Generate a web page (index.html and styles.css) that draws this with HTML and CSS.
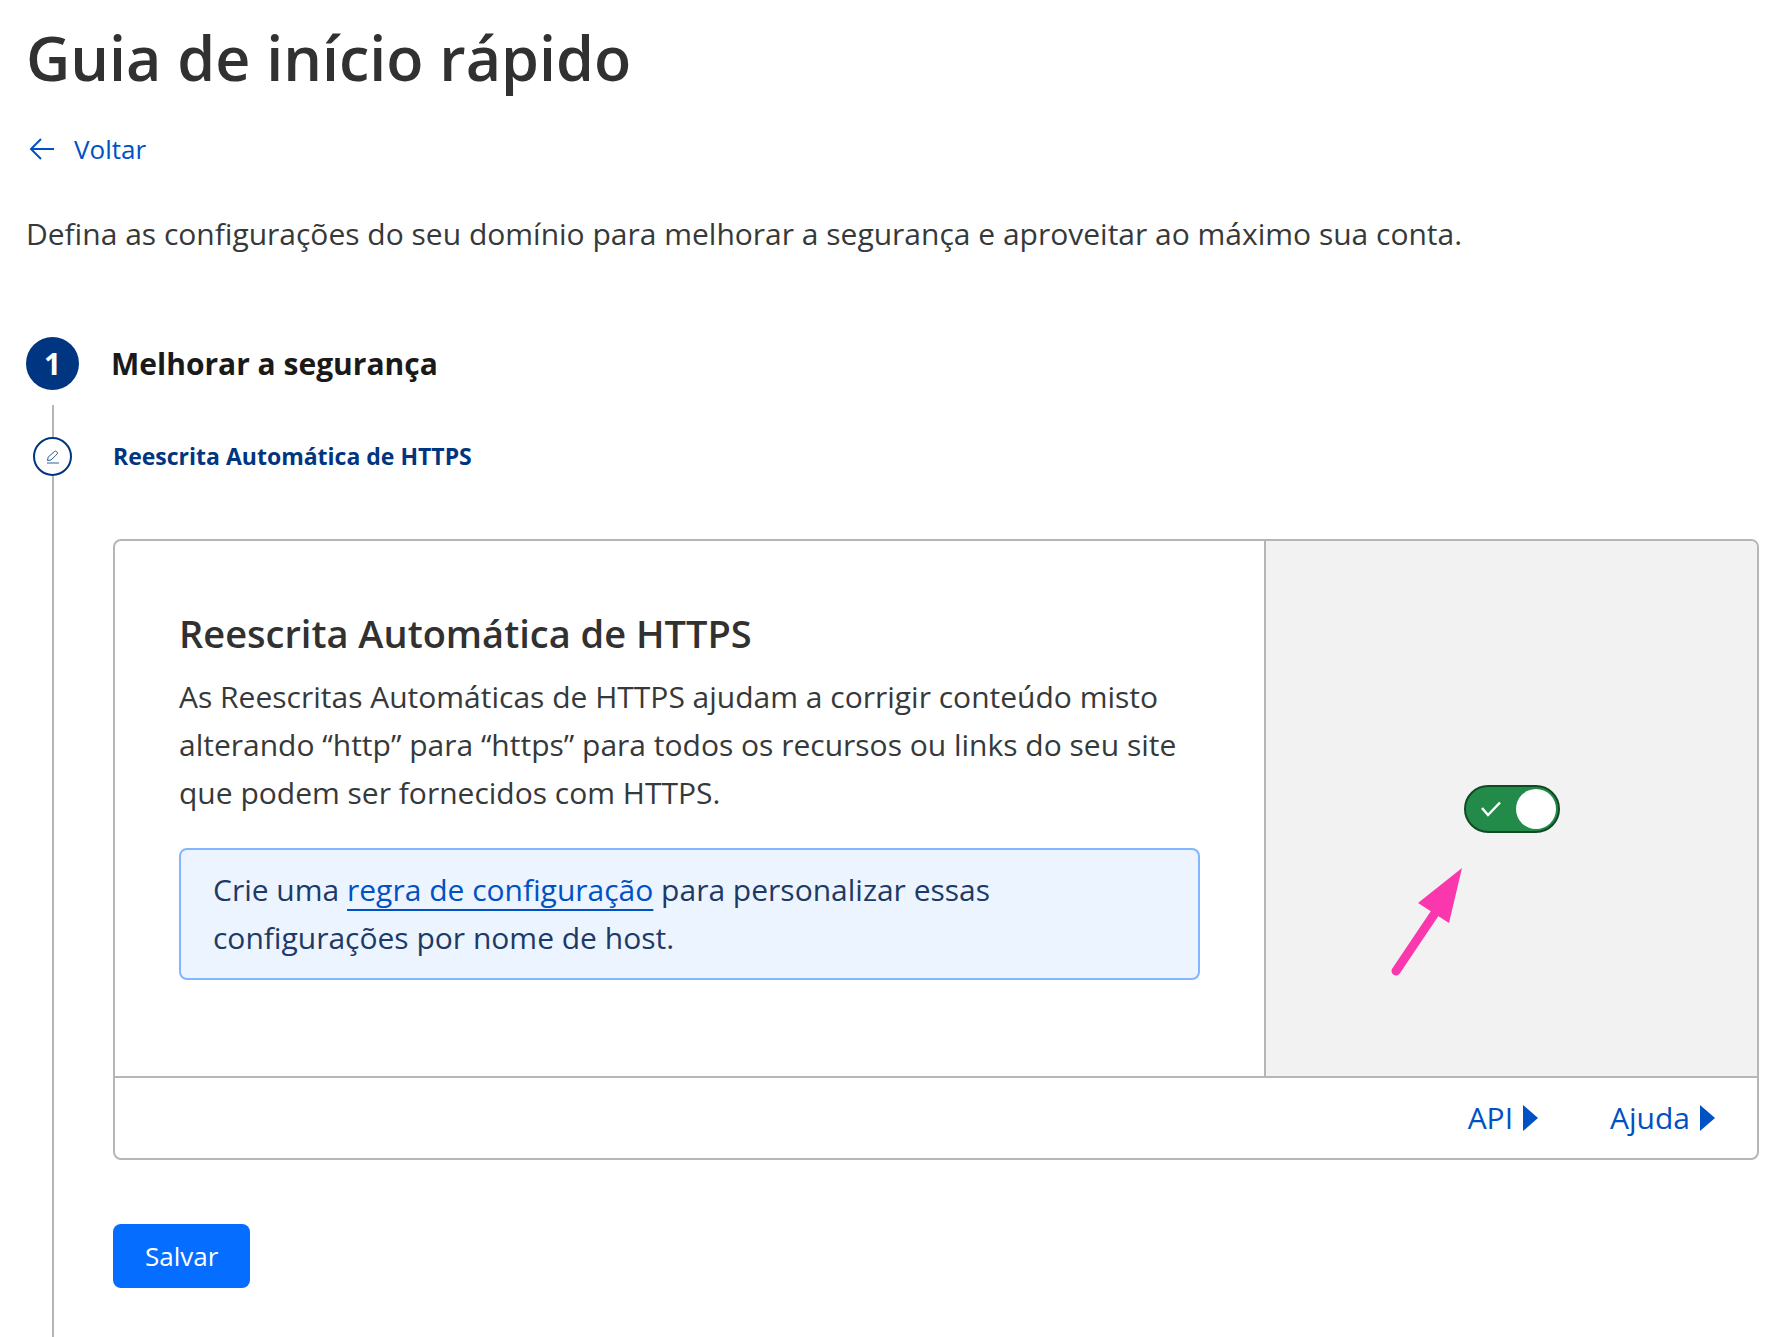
FILE: index.html
```html
<!DOCTYPE html>
<html lang="pt-BR">
<head>
<meta charset="UTF-8">
<meta name="viewport" content="width=device-width, initial-scale=1.0">
<title>Guia de início rápido</title>
<link rel="stylesheet" href="styles.css">
</head>
<body>
<main class="page">
  <h1>Guia de início rápido</h1>

  <a class="back" href="#">
    <svg width="26" height="24" viewBox="0 0 26 24" fill="none" stroke="currentColor" stroke-width="2">
      <path d="M26 12H3M13 2L3 12l10 10"/>
    </svg>
    Voltar
  </a>

  <p class="intro">Defina as configurações do seu domínio para melhorar a segurança e aproveitar ao máximo sua conta.</p>

  <div class="step">
    <span class="step-number">1</span>
    <h2>Melhorar a segurança</h2>
  </div>

  <div class="substep">
    <div class="rail">
      <span class="rail-icon">
        <svg width="14" height="16" viewBox="0 0 14 16" fill="none" stroke="currentColor" stroke-width="1">
          <path d="M1.500 11.500l.7-3.500L8.500 2.500q1-.8 2 0l.6.600q.8 1 0 2L5 11z" opacity=".8"/>
          <path d="M1 14h12" stroke-width="2" opacity=".4"/>
        </svg>
      </span>
    </div>

    <div class="substep-content">
      <h3>Reescrita Automática de HTTPS</h3>

      <section class="card">
        <div class="card-body">
          <div class="card-main">
            <h4 id="setting-title">Reescrita Automática de HTTPS</h4>
            <p>As Reescritas Automáticas de HTTPS ajudam a corrigir conteúdo misto alterando “http” para “https” para todos os recursos ou links do seu site que podem ser fornecidos com HTTPS.</p>
            <p class="info">Crie uma <a href="#">regra de configuração</a> para personalizar essas configurações por nome de host.</p>
          </div>
          <div class="card-side">
            <label class="toggle">
              <input type="checkbox" aria-labelledby="setting-title" checked>
              <svg class="check" width="20" height="16" viewBox="0 0 20 16" fill="none" stroke="currentColor" stroke-width="2.500">
                <path d="M1 7l6 7L19 1.500"/>
              </svg>
              <span class="knob"></span>
            </label>
            <svg class="pointer" width="74" height="110" viewBox="0 0 74 110">
              <path d="M5 104L44 46" stroke="#fb37ad" stroke-width="9" stroke-linecap="round"/>
              <path d="M71 1L27 36l31 20z" fill="#fb37ad"/>
            </svg>
          </div>
        </div>
        <div class="card-footer">
          <button type="button">API <span class="caret"></span></button>
          <button type="button">Ajuda <span class="caret"></span></button>
        </div>
      </section>

      <button class="save" type="button">Salvar</button>
    </div>
  </div>
</main>
</body>
</html>
```

FILE: styles.css
```css
* {
  box-sizing: border-box;
}

body {
  margin: 0;
  background-color: #fff;
  color: #36393a;
  font-family: "Open Sans", "Noto Sans", sans-serif;
  font-size: 30px;
  line-height: 48px;
}

h1, h2, h3, h4, p {
  margin: 0;
}

button {
  font: inherit;
  border: none;
  cursor: pointer;
}

a {
  color: #0051c3;
}

.page {
  display: flex;
  flex-direction: column;
  min-height: 100vh;
  padding: 18px 11px 0 26px;
}

h1 {
  color: #313131;
  font-size: 61px;
  font-weight: 600;
  line-height: 80px;
}

.back {
  display: flex;
  align-items: center;
  align-self: flex-start;
  gap: 20px;
  margin-top: 31px;
  padding-left: 2px;
  font-size: 26px;
  line-height: 40px;
  text-decoration: none;
}

.intro {
  margin-top: 41px;
}

.step {
  display: flex;
  align-items: center;
  gap: 32px;
  margin-top: 79px;
}

.step-number {
  width: 53px;
  height: 53px;
  border-radius: 50%;
  background-color: #003681;
  color: #fff;
  font-size: 30px;
  font-weight: 700;
  line-height: 53px;
  text-align: center;
}

h2 {
  color: #1a1a1a;
  font-size: 30px;
  font-weight: 700;
}

/* Stepper */
.substep {
  display: flex;
  flex: 1;
  gap: 34px;
  margin-top: 15px;
}

.rail {
  display: flex;
  flex-direction: column;
  align-items: center;
  width: 53px;
}

.rail::before,
.rail::after {
  content: "";
  width: 2px;
  height: 32px;
  background-color: #b6b6b6;
}

.rail::after {
  flex: 1;
}

.rail-icon {
  display: flex;
  align-items: center;
  justify-content: center;
  width: 39px;
  height: 39px;
  border: 2px solid #003681;
  border-radius: 50%;
  color: #003681;
}

.substep-content {
  flex: 1;
  padding: 31px 0 40px;
}

h3 {
  color: #003681;
  font-size: 23px;
  font-weight: 700;
  line-height: 40px;
}

/* Setting card */
.card {
  margin-top: 63px;
  border: 2px solid #b6b6b6;
  border-radius: 8px;
  overflow: hidden;
}

.card-body {
  display: flex;
}

.card-main {
  flex: 1;
  padding: 64px 64px 96px;
}

h4 {
  margin-bottom: 12px;
  color: #313131;
  font-size: 38px;
  font-weight: 600;
  line-height: 56px;
}

.info {
  margin-top: 31px;
  padding: 16px 32px;
  border: 2px solid #82b6ff;
  border-radius: 8px;
  background-color: #ecf4ff;
  color: #1d3a66;
}

.info a {
  text-decoration-thickness: 2px;
  text-decoration-skip-ink: none;
  text-underline-offset: 8px;
}

.card-side {
  position: relative;
  display: flex;
  align-items: center;
  justify-content: center;
  width: 30%;
  border-left: 2px solid #b6b6b6;
  background-color: #f2f2f2;
}

.toggle {
  position: relative;
  width: 96px;
  height: 48px;
}

.toggle input {
  appearance: none;
  display: block;
  width: 96px;
  height: 48px;
  margin: 0;
  border: 2px solid #0f4a23;
  border-radius: 24px;
  background-color: #228b49;
  cursor: pointer;
}

.check {
  position: absolute;
  top: 16px;
  left: 17px;
  color: #fff;
  pointer-events: none;
}

.knob {
  position: absolute;
  top: 4px;
  right: 4px;
  width: 40px;
  height: 40px;
  border-radius: 50%;
  background-color: #fff;
  pointer-events: none;
}

/* Pink arrow below the toggle */
.pointer {
  position: absolute;
  top: calc(50% + 58px);
  right: calc(50% + 47px);
}

.card-footer {
  display: flex;
  justify-content: flex-end;
  gap: 72px;
  padding: 16px 42px;
  border-top: 2px solid #b6b6b6;
}

.card-footer button {
  display: flex;
  align-items: center;
  gap: 10px;
  padding: 0;
  background: none;
  color: #0051c3;
}

.caret {
  border: 13px solid transparent;
  border-right: none;
  border-left: 15px solid #0051c3;
}

.save {
  margin-top: 64px;
  padding: 12px 32px;
  border-radius: 8px;
  background-color: #056dff;
  color: #fff;
  font-size: 26px;
  line-height: 40px;
}
```
